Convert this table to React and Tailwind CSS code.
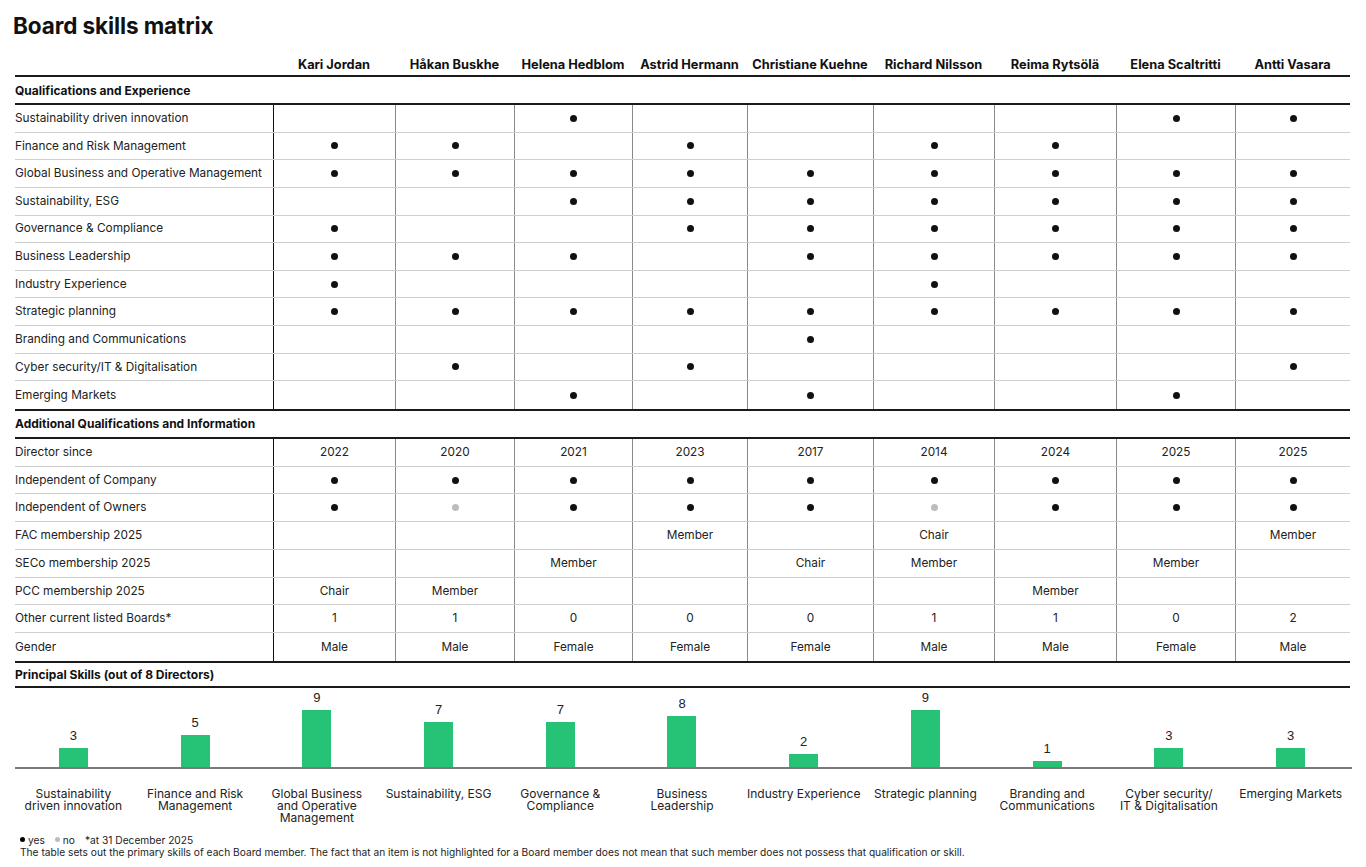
import React from "react";

const names = [
  "Kari Jordan",
  "Håkan Buskhe",
  "Helena Hedblom",
  "Astrid Hermann",
  "Christiane Kuehne",
  "Richard Nilsson",
  "Reima Rytsölä",
  "Elena Scaltritti",
  "Antti Vasara",
];

const qual = [
  ["Sustainability driven innovation", [0, 0, 1, 0, 0, 0, 0, 1, 1]],
  ["Finance and Risk Management", [1, 1, 0, 1, 0, 1, 1, 0, 0]],
  ["Global Business and Operative Management", [1, 1, 1, 1, 1, 1, 1, 1, 1]],
  ["Sustainability, ESG", [0, 0, 1, 1, 1, 1, 1, 1, 1]],
  ["Governance & Compliance", [1, 0, 0, 1, 1, 1, 1, 1, 1]],
  ["Business Leadership", [1, 1, 1, 0, 1, 1, 1, 1, 1]],
  ["Industry Experience", [1, 0, 0, 0, 0, 1, 0, 0, 0]],
  ["Strategic planning", [1, 1, 1, 1, 1, 1, 1, 1, 1]],
  ["Branding and Communications", [0, 0, 0, 0, 1, 0, 0, 0, 0]],
  ["Cyber security/IT & Digitalisation", [0, 1, 0, 1, 0, 0, 0, 0, 1]],
  ["Emerging Markets", [0, 0, 1, 0, 1, 0, 0, 1, 0]],
];

const add = [
  ["Director since", ["2022", "2020", "2021", "2023", "2017", "2014", "2024", "2025", "2025"]],
  ["Independent of Company", [1, 1, 1, 1, 1, 1, 1, 1, 1]],
  ["Independent of Owners", [1, 2, 1, 1, 1, 2, 1, 1, 1]],
  ["FAC membership 2025", ["", "", "", "Member", "", "Chair", "", "", "Member"]],
  ["SECo membership 2025", ["", "", "Member", "", "Chair", "Member", "", "Member", ""]],
  ["PCC membership 2025", ["Chair", "Member", "", "", "", "", "Member", "", ""]],
  ["Other current listed Boards*", ["1", "1", "0", "0", "0", "1", "1", "0", "2"]],
  ["Gender", ["Male", "Male", "Female", "Female", "Female", "Male", "Male", "Female", "Male"]],
];

const skills = [
  [["Sustainability", "driven innovation"], 3],
  [["Finance and Risk", "Management"], 5],
  [["Global Business", "and Operative", "Management"], 9],
  [["Sustainability, ESG"], 7],
  [["Governance &", "Compliance"], 7],
  [["Business", "Leadership"], 8],
  [["Industry Experience"], 2],
  [["Strategic planning"], 9],
  [["Branding and", "Communications"], 1],
  [["Cyber security/", "IT & Digitalisation"], 3],
  [["Emerging Markets"], 3],
];

const cols =
  "grid grid-cols-[258px_122px_119px_118px_115px_126px_121px_122px_119px_115px]";

function Cell({ v }) {
  if (v === 1) return <span className="w-[7px] h-[7px] rounded-full bg-[#111]" />;
  if (v === 2) return <span className="w-[7px] h-[7px] rounded-full bg-[#bdbdbd]" />;
  if (!v) return null;
  return <span className="pt-[1px]">{v}</span>;
}

function Row({ label, cells, h, last }) {
  return (
    <div className={`${cols} ${h} ${last ? "" : "border-b border-[#cfcfcf]"}`}>
      <div className="flex items-center whitespace-nowrap pt-[1px]">{label}</div>
      {cells.map((c, i) => (
        <div
          key={i}
          className={`flex items-center justify-center border-l ${
            i === 0 ? "border-[#111]" : "border-[#8a8a8a]"
          }`}
        >
          <Cell v={c} />
        </div>
      ))}
    </div>
  );
}

function Section({ title, h }) {
  return (
    <div className={`${h} flex items-center pt-[1px] font-bold text-[12px] text-[#111] border-b-2 border-[#1a1a1a]`}>
      {title}
    </div>
  );
}

export default function App() {
  return (
    <div className="w-[1366px] h-[867px] bg-white pl-[15px] font-['Inter',sans-serif] text-[11.8px] text-[#222] overflow-hidden">
      <div className="w-[1335px]">
        <div className="pt-[12px] h-[38px] text-[22.5px] leading-[27px] font-bold text-[#111] -ml-[2px] tracking-[-0.1px]">
          Board skills matrix
        </div>
        <div className={`${cols} h-[39px] items-end pb-[3px] font-bold text-[12.8px] leading-[14px] text-[#111] border-b-2 border-[#1a1a1a]`}>
          <div />
          {names.map((n) => (
            <div key={n} className="text-center whitespace-nowrap">
              {n}
            </div>
          ))}
        </div>
        <Section title="Qualifications and Experience" h="h-[28px]" />
        {qual.map(([l, c], i) => (
          <Row key={l} label={l} cells={c} h="h-[27.64px]" last={i === qual.length - 1} />
        ))}
        <div className="border-t-2 border-[#1a1a1a]" />
        <Section title="Additional Qualifications and Information" h="h-[28px]" />
        {add.map(([l, c], i) => (
          <Row key={l} label={l} cells={c} h="h-[27.75px]" last={i === add.length - 1} />
        ))}
        <div className="border-t-2 border-[#1a1a1a]" />
        <Section title="Principal Skills (out of 8 Directors)" h="h-[25px]" />
      </div>
      <div className="-ml-[2.5px] w-[1339px]">
        <div className="grid grid-cols-11 h-[79px]">
          {skills.map(([l, n], i) => (
            <div key={i} className="flex flex-col items-center justify-end">
              <div className="font-['Liberation_Sans',Arial,sans-serif] text-[13px] leading-[14px] mb-[5px] text-[#222]">
                {n}
              </div>
              <div className="w-[29px] bg-[#26c276]" style={{ height: `${n * 6.35}px` }} />
            </div>
          ))}
        </div>
        <div className="h-[2px] bg-[#7a7a7a] ml-[2.5px]" />
        <div className="grid grid-cols-11 h-[65px] pt-[19px] text-[12px] leading-[12px] text-[#222]">
          {skills.map(([l], i) => (
            <div key={i} className="flex flex-col items-center text-center whitespace-nowrap">
              {l.map((t) => (
                <div key={t}>{t}</div>
              ))}
            </div>
          ))}
        </div>
      </div>
      <div className="pl-[5px] text-[10.2px] leading-[12px] text-[#222]">
        <div className="flex items-center h-[12px]">
          <span className="inline-block w-[5px] h-[5px] rounded-full bg-black mr-[3px]" />
          <span>yes</span>
          <span className="inline-block w-[5px] h-[5px] rounded-full bg-[#bdbdbd] ml-[10px] mr-[3px]" />
          <span>no</span>
          <span className="ml-[10px]">*at 31 December 2025</span>
        </div>
        <div className="whitespace-nowrap">
          The table sets out the primary skills of each Board member. The fact that an item is not highlighted for a Board member does not mean that such member does not possess that qualification or skill.
        </div>
      </div>
    </div>
  );
}
